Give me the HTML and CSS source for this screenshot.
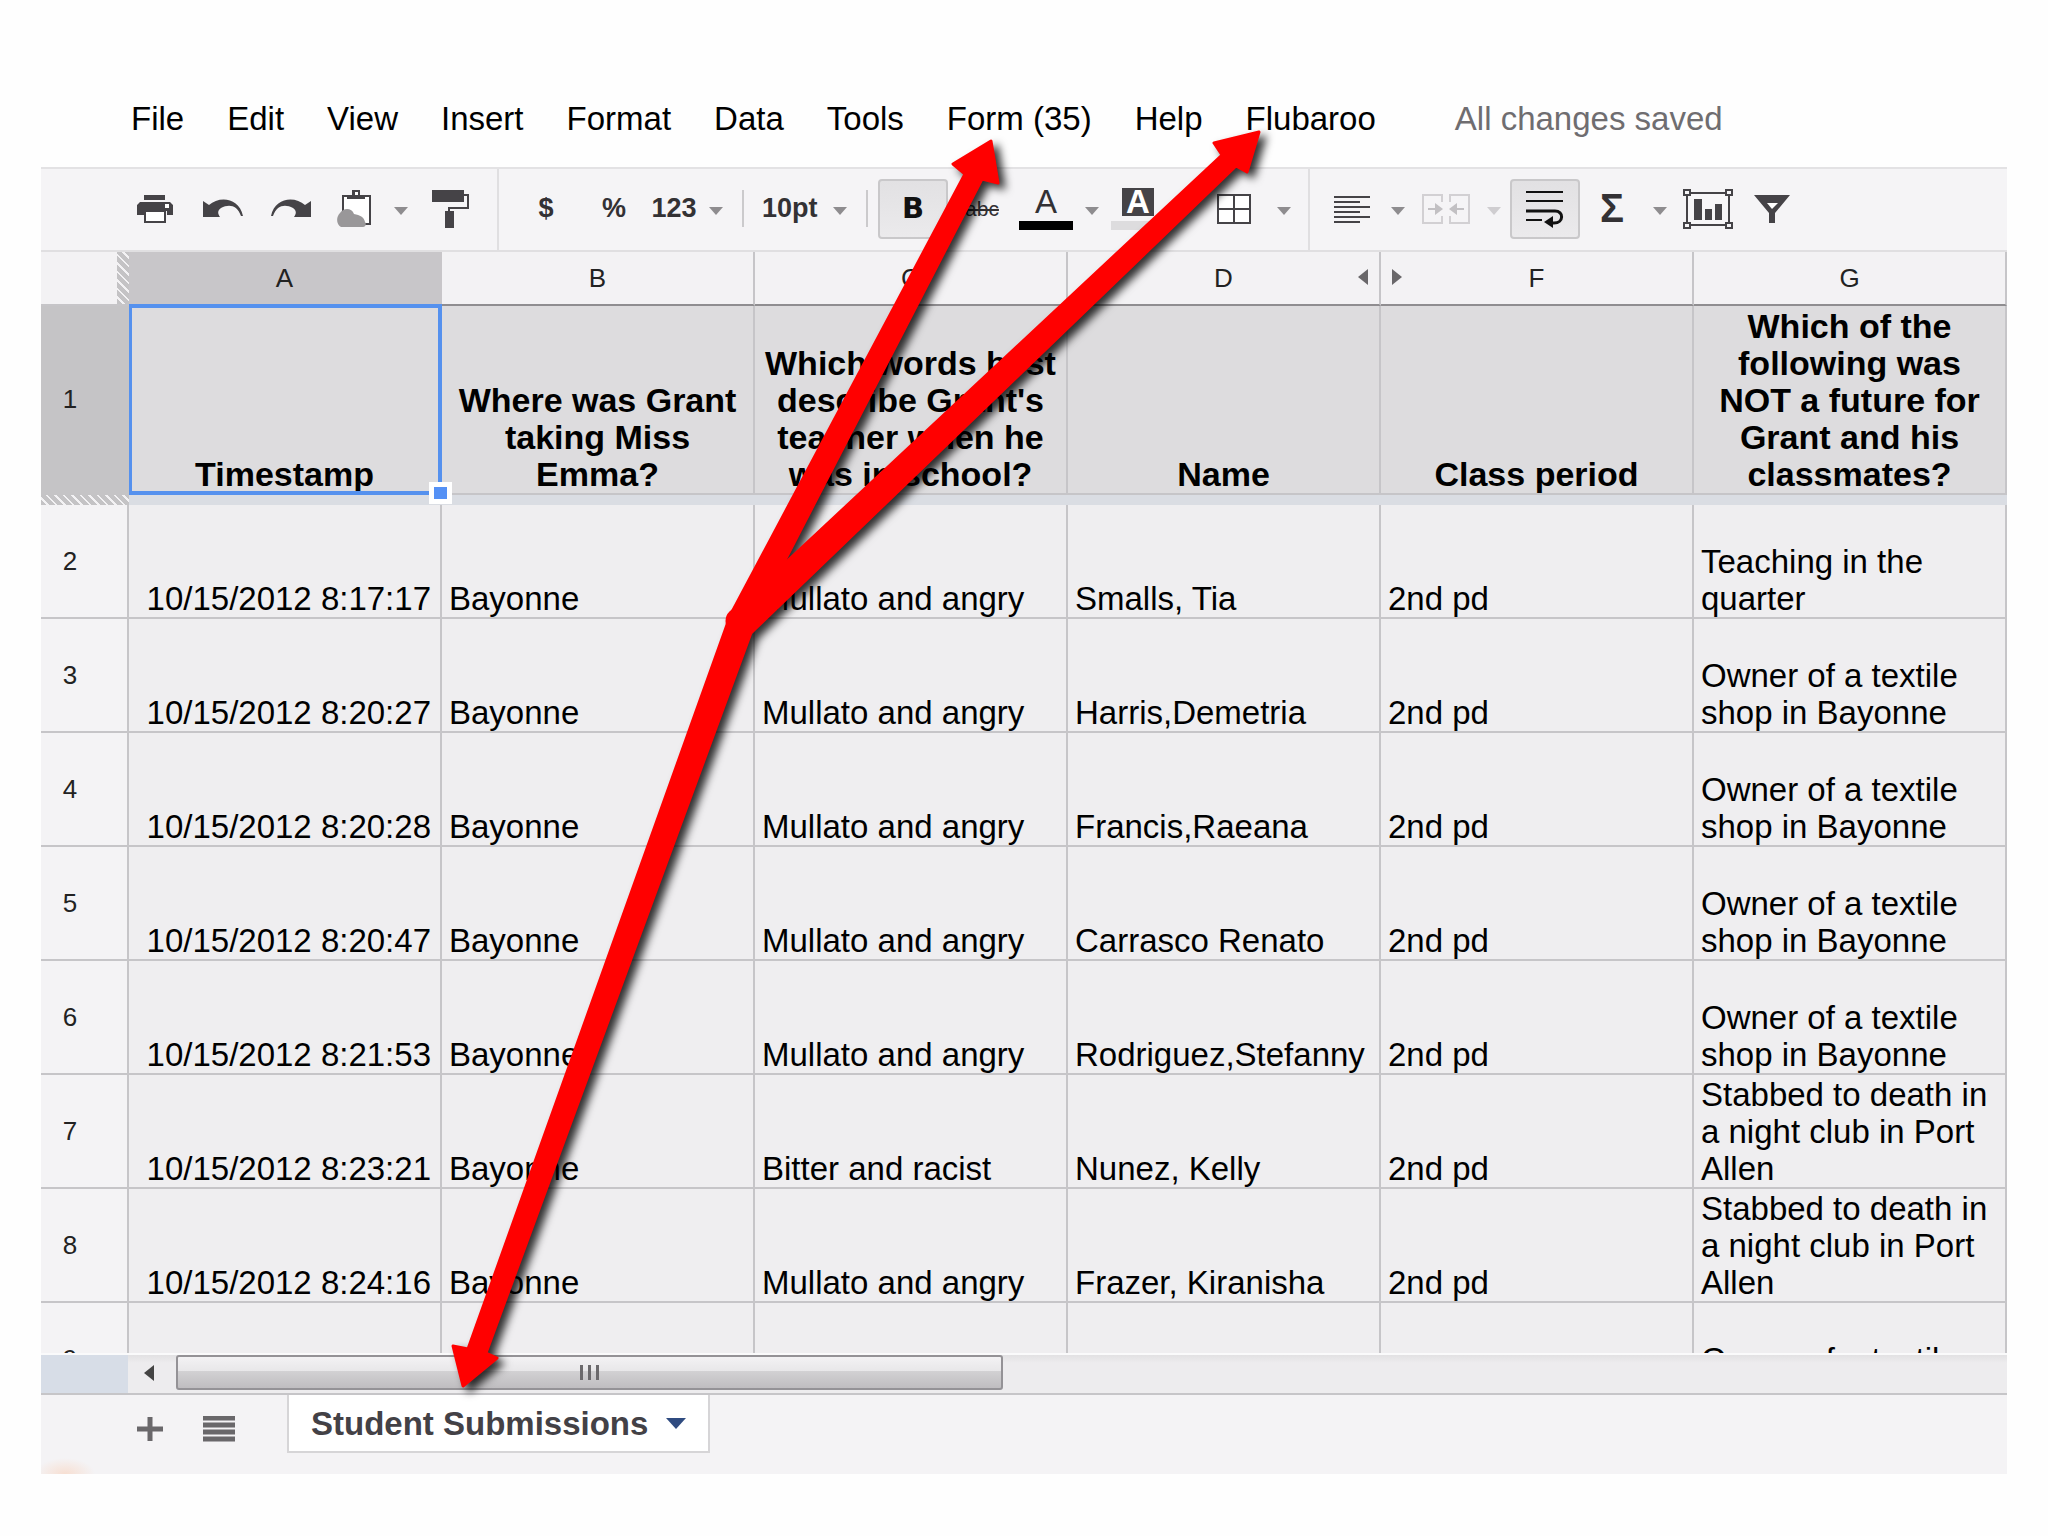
FILE: index.html
```html
<!DOCTYPE html>
<html lang="en">
<head>
    <meta charset="UTF-8">
    <meta name="viewport" content="width=device-width, initial-scale=1.0">
    <title>Student Submissions</title>
    <link rel="stylesheet" href="styles.css">
</head>
<body>
    <div class="app">
        <!-- MENU -->
        <nav class="menu">
            <button>File</button>
            <button>Edit</button>
            <button>View</button>
            <button>Insert</button>
            <button>Format</button>
            <button>Data</button>
            <button>Tools</button>
            <button>Form (35)</button>
            <button>Help</button>
            <button>Flubaroo</button>
            <span class="save-status">All changes saved</span>
        </nav>

        <!-- TOOLBAR -->
        <div class="toolbar">
            <div class="tool-group first">
                <button class="tool" aria-label="Print">
                    <svg width="36" height="28" viewBox="0 0 36 28"><path fill="#454347" d="M7 0h21v5H7zM3 7h30l3 3v10h-6v-4H7v4H0V10z"/><path fill="#fff" stroke="#454347" stroke-width="2" d="M8 16h20v11H8z"/><path fill="#fff" d="M28 9h4v4h-4z"/></svg>
                </button>
                <button class="tool" aria-label="Undo">
                    <svg width="40" height="20" viewBox="0 0 40 20"><path fill="#454347" d="M0 2l6 4C16-3 36-2 40 17h-2C34 6 26 5 18 9c-3 2-4 5-1 9H0z"/></svg>
                </button>
                <button class="tool" aria-label="Redo">
                    <svg width="40" height="20" viewBox="0 0 40 20"><path fill="#454347" d="M40 2l-6 4C24-3 4-2 0 17h2C6 6 14 5 22 9c3 2 4 5 1 9h17z"/></svg>
                </button>
                <button class="tool narrow" aria-label="Clipboard">
                    <svg width="36" height="38" viewBox="0 0 36 38"><path fill="#fff" stroke="#454347" stroke-width="2" d="M6 6h27v28H6z"/><path fill="#454347" d="M10 9V5h5V0h8v5h5v4z"/><path fill="#fff" d="M18 2h3v3h-3z"/><path fill="#999799" d="M4 37c-5-3-5-10-1-14 4-6 12-5 14 1 6 1 10 3 11 8 2 2 0 5-2 5z"/></svg>
                </button>
                <button class="caret" aria-label="Clipboard options"></button>
                <button class="tool" aria-label="Paint format">
                    <svg width="38" height="38" viewBox="0 0 38 38"><path fill="#454347" d="M0 0h32v12H0zM13 21h9v17h-9z"/><path fill="none" stroke="#454347" stroke-width="2" d="M32 5h4v13H17v4"/></svg>
                </button>
            </div>

            <div class="tool-group second">
                <button class="tool text">$</button>
                <button class="tool text">%</button>
                <button class="tool text number">123</button>
                <button class="caret" aria-label="More formats"></button>
                <span class="sep"></span>
                <select class="size" aria-label="Font size">
                    <option>10pt</option>
                </select>
                <span class="caret"></span>
                <span class="sep"></span>
                <button class="tool pressed bold" aria-label="Bold">B</button>
                <button class="tool strike" aria-label="Strikethrough"><s>abc</s></button>
                <button class="tool color" aria-label="Text color"><span class="letter">A</span><span class="swatch"></span></button>
                <button class="caret" aria-label="Text color options"></button>
                <button class="tool color fill" aria-label="Fill color"><span class="letter">A</span><span class="swatch"></span></button>
                <button class="caret" aria-label="Fill color options"></button>
                <button class="tool" aria-label="Borders">
                    <svg width="34" height="30" viewBox="0 0 34 30"><path fill="#fff" stroke="#454347" stroke-width="2" d="M1 1h32v28H1zM17 1v28M1 15h32"/></svg>
                </button>
                <button class="caret" aria-label="Border options"></button>
            </div>

            <div class="tool-group third">
                <button class="tool narrow" aria-label="Align">
                    <svg width="36" height="28" viewBox="0 0 36 28"><path stroke="#454347" stroke-width="2" d="M0 2h36M0 7h26M0 12h36M0 17h26M0 22h36M0 27h26"/></svg>
                </button>
                <button class="caret" aria-label="Align options"></button>
                <button class="tool snug" aria-label="Merge cells" disabled>
                    <svg width="48" height="30" viewBox="0 0 48 30"><g fill="none" stroke="#d2d0d3" stroke-width="2"><path d="M20 8V1H1v28h19v-7M28 8V1h19v28H28v-7"/></g><path fill="#c2c0c3" d="M6 14h7v-5l8 6-8 6v-5H6zM42 14h-7v-5l-8 6 8 6v-5h7z"/></svg>
                </button>
                <button class="caret light" aria-label="Merge options" disabled></button>
                <button class="tool pressed" aria-label="Wrap text">
                    <svg width="38" height="38" viewBox="0 0 38 38"><g fill="none" stroke="#111" stroke-width="2"><path d="M0 2h37M0 11h37M0 30h16"/><path stroke-width="3" d="M0 21h29c9 0 9 12-1 12h-5"/></g><path fill="#111" d="M18 32l9-6v12z"/></svg>
                </button>
                <button class="tool snug sigma" aria-label="Functions">Σ</button>
                <button class="caret" aria-label="Function options"></button>
                <button class="tool snug" aria-label="Insert chart">
                    <svg width="50" height="40" viewBox="0 0 50 40"><g fill="#f7f6f8" stroke="#454347" stroke-width="2"><path d="M4 4h42v32H4z"/><path d="M1 1h6v5H1zM43 1h6v5h-6zM1 34h6v5H1zM43 34h6v5h-6z"/></g><path fill="#454347" d="M11 10h8v21h-8zM22 20h7v11h-7zM32 15h7v16h-7z"/></svg>
                </button>
                <button class="tool snug" aria-label="Filter">
                    <svg width="36" height="28" viewBox="0 0 36 28"><path fill="#454347" d="M0 0h36L21 18v10h-6V18z"/><path fill="#fff" d="M13 8h11l-6 6z"/></svg>
                </button>
            </div>
        </div>

        <!-- SHEET -->
        <div class="sheet">
            <table>
                <colgroup><col class="row-col"><col><col><col><col><col><col></colgroup>
                <thead>
                    <tr>
                        <td class="corner"></td>
                        <th scope="col" class="current">A</th>
                        <th scope="col">B</th>
                        <th scope="col">C</th>
                        <th scope="col">D<button class="unhide left" aria-label="Show hidden columns"></button></th>
                        <th scope="col"><button class="unhide right" aria-label="Show hidden columns"></button>F</th>
                        <th scope="col">G</th>
                    </tr>
                </thead>
                <tbody>
                    <tr class="questions">
                        <th scope="row">1</th>
                        <td class="selected">Timestamp<span class="selection"></span><span class="handle"></span></td>
                        <td>Where was Grant taking Miss Emma?</td>
                        <td>Which words best describe Grant's teacher when he was in school?</td>
                        <td>Name</td>
                        <td>Class period</td>
                        <td>Which of the following was NOT a future for Grant and his classmates?</td>
                    </tr>
                    <tr class="freeze"><td class="hatch"></td><td colspan="6"></td></tr>
                    <tr>
                        <th scope="row">2</th>
                        <td class="time">10/15/2012 8:17:17</td>
                        <td>Bayonne</td>
                        <td>Mullato and angry</td>
                        <td>Smalls, Tia</td>
                        <td>2nd pd</td>
                        <td>Teaching in the quarter</td>
                    </tr>
                    <tr>
                        <th scope="row">3</th>
                        <td class="time">10/15/2012 8:20:27</td>
                        <td>Bayonne</td>
                        <td>Mullato and angry</td>
                        <td>Harris,Demetria</td>
                        <td>2nd pd</td>
                        <td>Owner of a textile shop in Bayonne</td>
                    </tr>
                    <tr>
                        <th scope="row">4</th>
                        <td class="time">10/15/2012 8:20:28</td>
                        <td>Bayonne</td>
                        <td>Mullato and angry</td>
                        <td>Francis,Raeana</td>
                        <td>2nd pd</td>
                        <td>Owner of a textile shop in Bayonne</td>
                    </tr>
                    <tr>
                        <th scope="row">5</th>
                        <td class="time">10/15/2012 8:20:47</td>
                        <td>Bayonne</td>
                        <td>Mullato and angry</td>
                        <td>Carrasco Renato</td>
                        <td>2nd pd</td>
                        <td>Owner of a textile shop in Bayonne</td>
                    </tr>
                    <tr>
                        <th scope="row">6</th>
                        <td class="time">10/15/2012 8:21:53</td>
                        <td>Bayonne</td>
                        <td>Mullato and angry</td>
                        <td>Rodriguez,Stefanny</td>
                        <td>2nd pd</td>
                        <td>Owner of a textile shop in Bayonne</td>
                    </tr>
                    <tr>
                        <th scope="row">7</th>
                        <td class="time">10/15/2012 8:23:21</td>
                        <td>Bayonne</td>
                        <td>Bitter and racist</td>
                        <td>Nunez, Kelly</td>
                        <td>2nd pd</td>
                        <td>Stabbed to death in a night club in Port Allen</td>
                    </tr>
                    <tr>
                        <th scope="row">8</th>
                        <td class="time">10/15/2012 8:24:16</td>
                        <td>Bayonne</td>
                        <td>Mullato and angry</td>
                        <td>Frazer, Kiranisha</td>
                        <td>2nd pd</td>
                        <td>Stabbed to death in a night club in Port Allen</td>
                    </tr>
                    <tr>
                        <th scope="row">9</th>
                        <td></td>
                        <td></td>
                        <td></td>
                        <td></td>
                        <td></td>
                        <td>Owner of a textile shop in Bayonne</td>
                    </tr>
                </tbody>
            </table>
        </div>

        <!-- SCROLLBAR -->
        <div class="scroll-row">
            <div class="scroll-corner"></div>
            <div class="scrollbar">
                <button class="scroll-left" aria-label="Scroll left"></button>
                <div class="thumb"><span></span><span></span><span></span></div>
            </div>
        </div>

        <!-- SHEET TABS -->
        <footer class="tabs">
            <button class="tab-tool" aria-label="Add sheet">
                <svg width="26" height="26" viewBox="0 0 26 26"><path stroke="#69676a" stroke-width="5" d="M13 1v24M0 13h26"/></svg>
            </button>
            <button class="tab-tool" aria-label="All sheets">
                <svg width="32" height="26" viewBox="0 0 32 26"><path stroke="#69676a" stroke-width="5" d="M0 2h32M0 9h32M0 16h32M0 23h32"/></svg>
            </button>
            <button class="tab">Student Submissions<span class="tab-caret"></span></button>
        </footer>
    </div>

    <!-- ARROWS -->
    <svg class="arrows" viewBox="0 0 2048 1536" preserveAspectRatio="none" aria-hidden="true">
        <g fill="#ff0000" stroke="#ff0000" stroke-width="3" stroke-linejoin="round">
            <path d="M732 612L965 174 953 164 991 141 998 183 982 179 750 628z"/>
            <path d="M734 611L1222 155 1214 143 1259 132 1247 172 1236 166 752 632z"/>
            <path d="M728 622L468 1349 453 1346 463 1386 497 1358 486 1353 752 630z"/>
            <circle cx="739" cy="621" r="12"/>
        </g>
    </svg>
</body>
</html>
```
FILE: styles.css
```css
* {
    box-sizing: border-box;
}

body {
    margin: 0;
    height: 100vh;
    background-color: #fefefe;
    font-family: "Liberation Sans", Arial, sans-serif;
    font-size: 33px;
    line-height: 37px;
    color: #000;
}

button,
select {
    margin: 0;
    padding: 0;
    border: none;
    background: none;
    font: inherit;
    color: inherit;
}

.app {
    display: flex;
    flex-direction: column;
    height: 100%;
    padding: 0 41px 62px;
}

/* MENU */
.menu {
    display: flex;
    gap: 43px;
    padding: 100px 90px 30px;
    white-space: nowrap;
}

.save-status {
    margin-left: 36px;
    color: #6f6d70;
}

/* TOOLBAR */
.toolbar {
    display: flex;
    height: 85px;
    flex: none;
    background-color: #f5f4f6;
    border-top: 2px solid #e3e2e4;
    border-bottom: 2px solid #e0dfe1;
}

.tool-group {
    display: flex;
    align-items: center;
    padding-bottom: 2px;
    border-right: 2px solid #e0dfe1;
}

.first {
    padding-left: 80px;
    padding-right: 12px;
}

.second {
    padding-left: 13px;
    padding-right: 8px;
}

.third {
    padding-left: 12px;
    border-right: none;
}

.tool {
    display: flex;
    align-items: center;
    justify-content: center;
    width: 68px;
    height: 60px;
    color: #333134;
}

.tool.narrow {
    width: 60px;
}

.tool.snug {
    width: 64px;
}

.tool.text,
.size {
    font-size: 27px;
    font-weight: bold;
}

.tool.number {
    width: 52px;
}

.size {
    width: 70px;
    height: 60px;
    padding-left: 8px;
    appearance: none;
    color: #333134;
}

.caret {
    display: flex;
    align-items: center;
    justify-content: center;
    width: 32px;
    height: 60px;
}

.caret::after {
    content: "";
    margin-top: 4px;
    border: 7px solid transparent;
    border-top: 8px solid #8e8c8f;
    border-bottom: none;
}

.caret.light::after {
    border-top-color: #cfcdd0;
}

.sep {
    width: 2px;
    height: 37px;
    margin: 0 10px;
    background-color: #cbcacc;
}

.tool.pressed {
    width: 70px;
    border: 2px solid #c9c8ca;
    border-radius: 4px;
    background: linear-gradient(#e2e1e3, #ebeaec);
}

.tool.bold {
    font-family: "DejaVu Sans", sans-serif;
    font-size: 29px;
    font-weight: bold;
    color: #111;
}

.tool.strike {
    font-size: 21px;
}

.tool.color {
    flex-direction: column;
    justify-content: flex-start;
    width: 60px;
    padding-top: 9px;
}

.letter {
    width: 32px;
    height: 28px;
    line-height: 28px;
    font-size: 33px;
}

.swatch {
    width: 54px;
    height: 9px;
    margin-top: 5px;
    background-color: #000;
}

.fill .letter {
    background-color: #454347;
    color: #fff;
    font-weight: bold;
}

.fill .swatch {
    background-color: #dddcde;
}

.sigma {
    font-size: 40px;
    font-weight: bold;
}

/* SHEET */
.sheet {
    flex: 1;
    min-height: 0;
    overflow: hidden;
}

table {
    width: 100%;
    table-layout: fixed;
    border-collapse: separate;
    border-spacing: 0;
}

.row-col {
    width: 88px;
}

th,
td {
    height: 114px;
    padding: 0 7px;
    border-right: 2px solid #c6c5c8;
    border-bottom: 2px solid #c6c5c8;
}

td {
    background-color: #efeef0;
    vertical-align: bottom;
}

th {
    font-size: 26px;
    font-weight: normal;
    color: #222;
}

tbody th {
    padding-right: 35px;
    background-color: #f4f3f5;
}

thead th,
thead td {
    position: relative;
    height: 54px;
    background-color: #f3f2f4;
    border-bottom-color: #8f8d90;
}

thead .current {
    background-color: #c8c6c9;
    border-right-color: #c8c6c9;
}

thead .corner {
    background: repeating-linear-gradient(45deg, #c4c3c5 0 4px, #f3f2f4 4px 6px) right / 12px 100% no-repeat #f3f2f4;
    border-right: none;
    border-bottom-color: #c6c5c8;
}

.unhide {
    position: absolute;
    top: 17px;
    width: 10px;
    height: 16px;
    background-color: #69676a;
}

.unhide.left {
    right: 11px;
    clip-path: polygon(100% 0, 100% 100%, 0 50%);
}

.unhide.right {
    left: 11px;
    clip-path: polygon(0 0, 0 100%, 100% 50%);
}

.time {
    padding-right: 9px;
    text-align: right;
}

.questions th,
.questions td {
    height: 189px;
}

.questions th {
    background-color: #c5c4c6;
    border-color: #c5c4c6;
}

.questions td {
    background-color: #dddcde;
    font-size: 34px;
    font-weight: bold;
    text-align: center;
}

.questions .selected {
    position: relative;
}

.selection {
    position: absolute;
    inset: -2px -2px -2px 0;
    border: 4px solid #5591ee;
    border-left-width: 3px;
}

.handle {
    position: absolute;
    right: -12px;
    bottom: -11px;
    z-index: 1;
    width: 23px;
    height: 22px;
    border: 5px solid #fff;
    background-color: #5591f5;
}

.freeze td {
    height: 10px;
    padding: 0;
    border: none;
    background-color: #dadde3;
}

.freeze .hatch {
    background: repeating-linear-gradient(45deg, #c4c3c5 0 4px, #f3f2f4 4px 6px);
}

/* SCROLLBAR */
.scroll-row {
    display: flex;
    flex: none;
    height: 40px;
    border-top: 2px solid #fafafb;
}

.scroll-corner {
    width: 87px;
    background-color: #d7dde7;
}

.scrollbar {
    display: flex;
    flex: 1;
    padding: 0 0 3px;
    background: linear-gradient(#e2e1e3, #edecee 8px);
}

.scroll-left {
    width: 48px;
}

.scroll-left::before {
    content: "";
    display: block;
    width: 0;
    margin-left: 16px;
    border: 8px solid transparent;
    border-right: 10px solid #444;
    border-left: none;
}

.thumb {
    display: flex;
    align-items: center;
    justify-content: center;
    gap: 5px;
    width: 44%;
    border: 2px solid #949296;
    border-radius: 3px;
    background: linear-gradient(#f3f2f4, #e8e7e9 45%, #d2d1d3 46%, #bfbdc0);
}

.thumb span {
    width: 3px;
    height: 15px;
    background-color: #6b696c;
}

/* SHEET TABS */
.tabs {
    display: flex;
    flex: none;
    align-items: flex-start;
    height: 81px;
    padding-left: 74px;
    border-top: 2px solid #c6c5c8;
    background: radial-gradient(ellipse 30px 16px at 24px 100%, #f7dfd2, transparent) #f4f3f5;
}

.tab-tool {
    display: flex;
    align-items: center;
    justify-content: center;
    width: 69px;
    height: 67px;
}

.tab {
    display: flex;
    align-items: center;
    gap: 18px;
    margin-left: 34px;
    padding: 10px 22px 9px;
    border: 2px solid #d6d5d7;
    border-top: none;
    background-color: #fff;
    font-weight: bold;
    color: #434146;
}

.tab-caret {
    border: 10px solid transparent;
    border-top: 11px solid #2f4b80;
    border-bottom: none;
}

/* ARROWS */
.arrows {
    position: absolute;
    top: 0;
    left: 0;
    width: 100%;
    height: 100%;
    pointer-events: none;
    filter: drop-shadow(6px 5px 4px rgba(0, 0, 0, 0.8));
}
```
